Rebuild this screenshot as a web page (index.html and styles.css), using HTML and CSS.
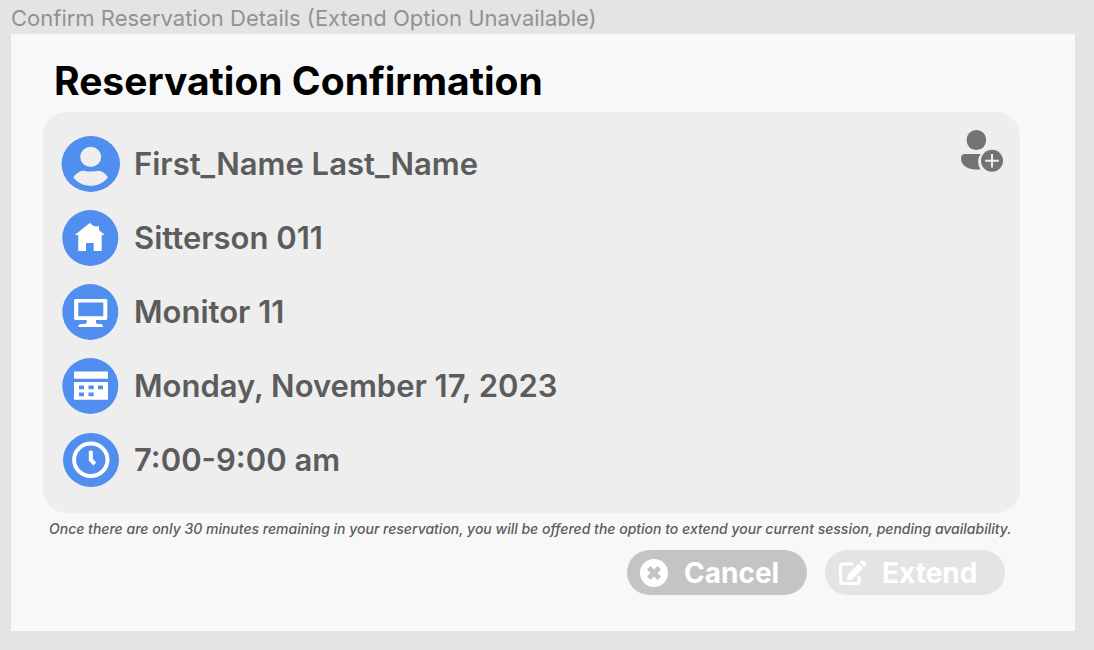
FILE: index.html
```html
<!DOCTYPE html>
<html lang="en">
<head>
<meta charset="utf-8">
<title>Reservation Confirmation</title>
<link rel="stylesheet" href="styles.css">
</head>
<body>
<p class="frame-label">Confirm Reservation Details (Extend Option Unavailable)</p>
<main class="frame">
  <h1 class="title">Reservation Confirmation</h1>
  <section class="card">
    <ul class="details">
      <li class="detail">
        <svg class="detail-icon" viewBox="0 0 60 56" aria-hidden="true">
          <ellipse class="disc" cx="29.8" cy="28" rx="29.2" ry="28"/>
          <ellipse class="cutout" cx="29.7" cy="20.8" rx="10.5" ry="10.1"/>
          <path class="cutout" d="M12.3 41.4C16 36 21 34.4 23.5 34.9Q29.7 36.2 36 34.9C39 34.4 43.5 36 47 41.4C42 47.2 36 49.7 29.7 49.7S17 47.2 12.3 41.4Z"/>
        </svg>
        <span>First_Name Last_Name</span>
      </li>
      <li class="detail">
        <svg class="detail-icon" viewBox="0 0 60 56" aria-hidden="true">
          <circle class="disc" cx="29.3" cy="28" r="28"/>
          <path class="glyph" d="M28.8 13L13.8 25H17.3V41H25V33H32.7V41H40.7V25H43.9L38 20.2V16.3H33Z"/>
        </svg>
        <span>Sitterson 011</span>
      </li>
      <li class="detail">
        <svg class="detail-icon" viewBox="0 0 60 56" aria-hidden="true">
          <circle class="disc" cx="29.3" cy="28" r="28"/>
          <path class="glyph" fill-rule="evenodd" d="M14.5 15H44.9Q46.3 15 46.3 16.4V34.6Q46.3 36 44.9 36H35V38.7Q35 39.7 37 39.9H39.5Q42 40.2 42 43H17.3Q17.3 40.2 20 39.9H23Q25.5 39.7 25.7 38.7V36H14.5Q13.1 36 13.1 34.6V16.4Q13.1 15 14.5 15ZM17.3 18.5V32.3H42.3V18.5Z"/>
        </svg>
        <span>Monitor 11</span>
      </li>
      <li class="detail">
        <svg class="detail-icon" viewBox="0 0 60 56" aria-hidden="true">
          <circle class="disc" cx="29.3" cy="28" r="28"/>
          <path class="glyph" fill-rule="evenodd" d="M13 13.5H47V20.7H13ZM13 24H47V41.7H13ZM18 27.5V31.2H23V27.5ZM27.5 27.5V31.2H32.7V27.5ZM37 27.5V31.2H42V27.5ZM18 34.5V38.2H23V34.5ZM27.5 34.5V38.2H32.7V34.5Z"/>
        </svg>
        <span>Monday, November 17, 2023</span>
      </li>
      <li class="detail">
        <svg class="detail-icon" viewBox="0 0 60 56" aria-hidden="true">
          <ellipse class="disc" cx="30" cy="28" rx="28" ry="27"/>
          <ellipse class="ring" cx="29.8" cy="27.8" rx="16.7" ry="16.2"/>
          <path class="hands" d="M29.8 18.7V27.8L33.8 32"/>
        </svg>
        <span>7:00-9:00 am</span>
      </li>
    </ul>
    <button class="add-person" type="button" aria-label="Add person">
      <svg class="add-icon" viewBox="0 0 44 44" aria-hidden="true">
        <ellipse cx="16.4" cy="11" rx="9.8" ry="10.1"/>
        <path d="M5 25H20.6A13 13 0 0 0 20.6 40.4C12 41.5 1 38.5 1 29.5Q1 25 5 25Z"/>
        <circle cx="32" cy="31.8" r="11"/>
        <path class="plus" d="M32 25V38.6M25.2 31.8H38.8"/>
      </svg>
    </button>
  </section>
  <p class="note">Once there are only 30 minutes remaining in your reservation, you will be offered the option to extend your current session, pending availability.</p>
  <div class="actions">
    <button class="btn btn-cancel" type="button">
      <svg class="btn-icon" viewBox="0 0 30 30" aria-hidden="true">
        <circle class="glyph" cx="15" cy="15" r="14"/>
        <path class="cross" d="M9.7 9.7L20.3 20.3M20.3 9.7L9.7 20.3"/>
      </svg>
      <span>Cancel</span>
    </button>
    <button class="btn btn-extend" type="button" disabled>
      <svg class="btn-icon" viewBox="0 0 30 30" aria-hidden="true">
        <path class="edit-box" d="M16.5 6H5.6Q3.6 6 3.6 8V23.6Q3.6 25.6 5.6 25.6H20Q22 25.6 22 23.6V18"/>
        <path class="glyph" d="M10.5 17L21.5 5.8L26 10.3L15 21.4L10 22.2ZM22.6 4.6L24.2 2.8Q25.4 1.6 26.8 2.9L28.6 4.7Q30 6.1 28.8 7.5L27.2 9.2Z"/>
      </svg>
      <span>Extend</span>
    </button>
  </div>
</main>
</body>
</html>
```

FILE: styles.css
```css
* {
  box-sizing: border-box;
}

body {
  margin: 0;
  padding: 4px 19px 19px 11px;
  min-height: 100vh;
  display: flex;
  flex-direction: column;
  background: #e4e4e4;
  color: #5c5c5c;
  font-family: Inter, "Liberation Sans", sans-serif;
}

p,
h1,
ul {
  margin: 0;
  padding: 0;
}

button {
  border: 0;
  padding: 0;
  background: none;
  font: inherit;
}

svg {
  display: block;
  flex: none;
}

.frame-label {
  padding-bottom: 2px;
  color: #929292;
  font-size: 22px;
  line-height: 28px;
}

.frame {
  flex: 1;
  padding: 23px 55px 36px 32px;
  background: #f8f8f8;
}

.title {
  padding-left: 11px;
  color: #000;
  font-size: 39px;
  font-weight: 700;
  line-height: 48px;
}

.card {
  display: flex;
  justify-content: space-between;
  align-items: flex-start;
  margin-top: 7px;
  padding: 24px 16px 25px 18px;
  border-radius: 24px;
  background: #eee;
}

.details {
  display: flex;
  flex-direction: column;
  gap: 18px;
  list-style: none;
}

.detail {
  display: flex;
  align-items: center;
  gap: 13px;
  font-size: 31px;
  font-weight: 600;
  line-height: 40px;
}

.detail-icon {
  width: 60px;
  height: 56px;
}

.disc {
  fill: #508eef;
}

.cutout {
  fill: #eee;
}

.glyph {
  fill: #fff;
}

.ring,
.hands {
  fill: none;
  stroke: #fff;
  stroke-width: 4;
}

.add-person {
  margin-top: -7px;
}

.add-icon {
  width: 44px;
  height: 44px;
  fill: #727472;
}

.plus {
  stroke: #eee;
  stroke-width: 2;
}

.note {
  padding: 6px 0 0 6px;
  font-size: 14px;
  font-style: italic;
  font-weight: 500;
  line-height: 20px;
}

.actions {
  display: flex;
  justify-content: flex-end;
  gap: 18px;
  padding: 11px 15px 0 0;
}

.btn {
  display: flex;
  align-items: center;
  gap: 15px;
  width: 180px;
  height: 45px;
  padding-left: 12px;
  border-radius: 23px;
  color: #fff;
  font-size: 28px;
  font-weight: 700;
}

.btn-icon {
  width: 30px;
  height: 30px;
}

.btn-cancel {
  background: #c4c4c4;
}

.btn-extend {
  background: #e4e4e4;
}

.cross {
  stroke: #c4c4c4;
  stroke-width: 5;
}

.edit-box {
  fill: none;
  stroke: #fff;
  stroke-width: 3;
}
```
